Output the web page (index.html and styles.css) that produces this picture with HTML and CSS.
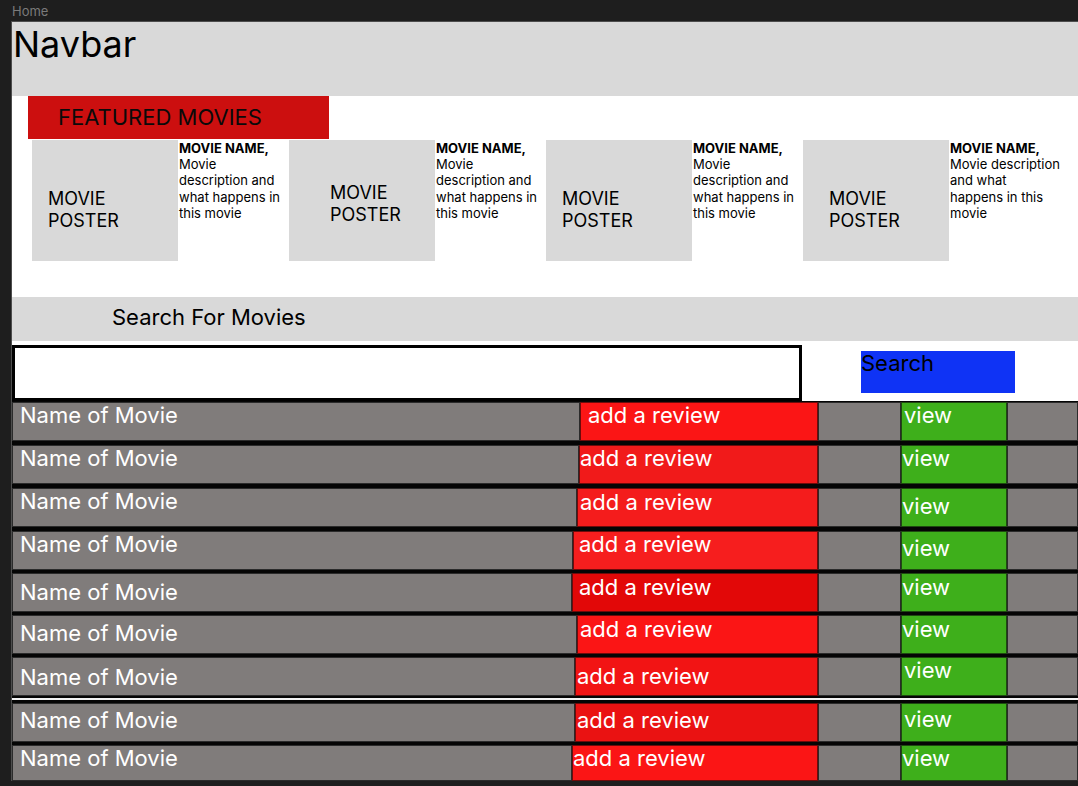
FILE: index.html
```html
<!DOCTYPE html>
<html lang="en">
<head>
<meta charset="utf-8">
<title>Home</title>
<link rel="stylesheet" href="styles.css">
</head>
<body>
<div class="label">Home</div>
<main class="frame">
  <header class="navbar">Navbar</header>
  <section class="featured">
    <h2 class="featured-title">FEATURED MOVIES</h2>
    <div class="cards">
      <article class="card">
        <div class="poster">MOVIE<br>POSTER</div>
        <p class="desc"><b>MOVIE NAME,</b><br>Movie<br>description and<br>what happens in<br>this movie</p>
      </article>
      <article class="card">
        <div class="poster">MOVIE<br>POSTER</div>
        <p class="desc"><b>MOVIE NAME,</b><br>Movie<br>description and<br>what happens in<br>this movie</p>
      </article>
      <article class="card">
        <div class="poster">MOVIE<br>POSTER</div>
        <p class="desc"><b>MOVIE NAME,</b><br>Movie<br>description and<br>what happens in<br>this movie</p>
      </article>
      <article class="card">
        <div class="poster">MOVIE<br>POSTER</div>
        <p class="desc"><b>MOVIE NAME,</b><br>Movie description<br>and what<br>happens in this<br>movie</p>
      </article>
    </div>
  </section>
  <section class="search">
    <h2 class="search-title">Search For Movies</h2>
    <div class="search-row">
      <input class="search-input" type="text" aria-label="Search for movies">
      <button class="search-btn" type="button">Search</button>
    </div>
  </section>
  <ul class="list">
    <li class="row"><div class="cell name">Name of Movie</div><div class="cell review">add a review</div><div class="cell blank"></div><div class="cell view">view</div><div class="cell end"></div></li>
    <li class="row"><div class="cell name">Name of Movie</div><div class="cell review">add a review</div><div class="cell blank"></div><div class="cell view">view</div><div class="cell end"></div></li>
    <li class="row"><div class="cell name">Name of Movie</div><div class="cell review">add a review</div><div class="cell blank"></div><div class="cell view">view</div><div class="cell end"></div></li>
    <li class="row"><div class="cell name">Name of Movie</div><div class="cell review">add a review</div><div class="cell blank"></div><div class="cell view">view</div><div class="cell end"></div></li>
    <li class="row"><div class="cell name">Name of Movie</div><div class="cell review">add a review</div><div class="cell blank"></div><div class="cell view">view</div><div class="cell end"></div></li>
    <li class="row"><div class="cell name">Name of Movie</div><div class="cell review">add a review</div><div class="cell blank"></div><div class="cell view">view</div><div class="cell end"></div></li>
    <li class="row"><div class="cell name">Name of Movie</div><div class="cell review">add a review</div><div class="cell blank"></div><div class="cell view">view</div><div class="cell end"></div></li>
    <li class="row"><div class="cell name">Name of Movie</div><div class="cell review">add a review</div><div class="cell blank"></div><div class="cell view">view</div><div class="cell end"></div></li>
    <li class="row"><div class="cell name">Name of Movie</div><div class="cell review">add a review</div><div class="cell blank"></div><div class="cell view">view</div><div class="cell end"></div></li>
  </ul>
</main>
</body>
</html>
```
FILE: styles.css
```css
* { box-sizing: border-box; }

html, body {
  margin: 0;
  background: #1e1e1e;
}

body {
  width: 1078px;
  height: 786px;
  overflow: hidden;
  font-family: Inter, "Noto Sans", sans-serif;
  color: #000;
}

.label {
  height: 21px;
  padding: 3px 0 0 12px;
  font-size: 13px;
  line-height: 16px;
  color: #7a7a7a;
}

.frame {
  margin-left: 11px;
  width: 1067px;
  background: #fff;
  border-left: 1px solid #4d4d4d;
  border-top: 1px solid #4d4d4d;
}

.navbar {
  height: 74px;
  background: #d9d9d9;
  font-size: 36px;
  line-height: 44px;
  padding-left: 1px;
}

.featured {
  padding-left: 16px;
}

.featured-title {
  margin: 0;
  width: 301px;
  height: 43px;
  background: #cc0f0f;
  font-size: 22px;
  font-weight: 400;
  line-height: 43px;
  padding-left: 30px;
  color: #0a0a0a;
}

.cards {
  display: flex;
  padding-left: 4px;
  margin-top: 1px;
}

.card {
  display: flex;
  flex: none;
  width: 257px;
}

.poster {
  flex: none;
  width: 146px;
  height: 121px;
  background: #d9d9d9;
  font-size: 18px;
  line-height: 22px;
  padding: 48px 0 0 16px;
}

.card:nth-child(2) .poster { padding: 42px 0 0 41px; }
.card:nth-child(4) .poster { padding-left: 26px; }

.desc {
  margin: 0;
  padding-left: 1px;
  font-size: 13px;
  line-height: 16.2px;
  white-space: nowrap;
}

.desc b { font-weight: 700; }

.search {
  margin-top: 36px;
}

.search-title {
  margin: 0;
  height: 44px;
  background: #d9d9d9;
  font-size: 22px;
  font-weight: 400;
  line-height: 26px;
  padding: 7px 0 0 100px;
}

.search-row {
  display: flex;
  margin-top: 4px;
  height: 56px;
}

.search-input {
  flex: none;
  width: 790px;
  height: 56px;
  margin: 0;
  padding: 0;
  border: 3px solid #000;
  background: #fff;
  outline: none;
}

.search-btn {
  display: flex;
  align-items: flex-start;
  flex: none;
  margin: 6px 0 0 59px;
  width: 154px;
  height: 42px;
  padding: 0;
  border: none;
  background: #0f33f5;
  font-family: Inter, "Noto Sans", sans-serif;
  font-size: 22px;
  line-height: 25px;
  color: #000;
  text-align: left;
}

.list {
  list-style: none;
  margin: 0;
  padding: 1px 0 0;
  background: #050505;
}

.row {
  display: flex;
  height: 39px;
  margin-top: 3px;
}

.row:first-child { margin-top: 0; }
.row:nth-child(2), .row:nth-child(3), .row:nth-child(4) { margin-top: 4px; }
.row:nth-child(8) {
  margin-top: 7px;
  box-shadow: 0 -3px 0 #050505, 0 -5px 0 #f2f2f2;
}
.row:nth-child(9) { height: 36px; }

.cell {
  height: 100%;
  border: 1px solid #2b2b2b;
  font-size: 22px;
  line-height: 24px;
  color: #fff;
  white-space: nowrap;
  overflow: hidden;
}

.name {
  flex: 1;
  min-width: 0;
  background: #807c7b;
  padding-left: 7px;
}

.review {
  flex: none;
  width: 238px;
  background: #fb1515;
  border-color: #6e0a0a;
}

.blank {
  flex: none;
  width: 83px;
  background: #807c7b;
}

.view {
  flex: none;
  width: 106px;
  background: #3eaf1b;
  border-color: #1e4a10;
}

.end {
  flex: none;
  width: 71px;
  background: #807c7b;
}

/* per-row placement of the hand-drawn wireframe */
.row:nth-child(1) .review { width: 238px; padding-left: 7px; }
.row:nth-child(1) .view { padding-left: 2px; }

.row:nth-child(2) .review { width: 239px; background: #f11a1a; }

.row:nth-child(3) .review { width: 241px; padding: 1px 0 0 2px; background: #f41c1c; }
.row:nth-child(3) .view { padding-top: 5px; }

.row:nth-child(4) .review { width: 245px; padding-left: 5px; background: #f61e1e; }
.row:nth-child(4) .view { padding-top: 4px; }

.row:nth-child(5) .name { padding-top: 6px; }
.row:nth-child(5) .review { width: 246px; padding: 1px 0 0 6px; background: #e20808; }
.row:nth-child(5) .view { padding-top: 1px; }

.row:nth-child(6) .name { padding-top: 5px; }
.row:nth-child(6) .review { width: 241px; padding: 1px 0 0 2px; background: #fb1515; }
.row:nth-child(6) .view { padding-top: 1px; }

.row:nth-child(7) .name { padding-top: 7px; }
.row:nth-child(7) .review { width: 243px; padding: 6px 0 0 1px; background: #f21414; }
.row:nth-child(7) .view { padding-left: 2px; }

.row:nth-child(8) .name { padding-top: 4px; }
.row:nth-child(8) .review { width: 243px; padding: 4px 0 0 1px; background: #ea1212; }
.row:nth-child(8) .view { padding: 3px 0 0 2px; }

.row:nth-child(9) .review { width: 246px; background: #fb1515; }
```
